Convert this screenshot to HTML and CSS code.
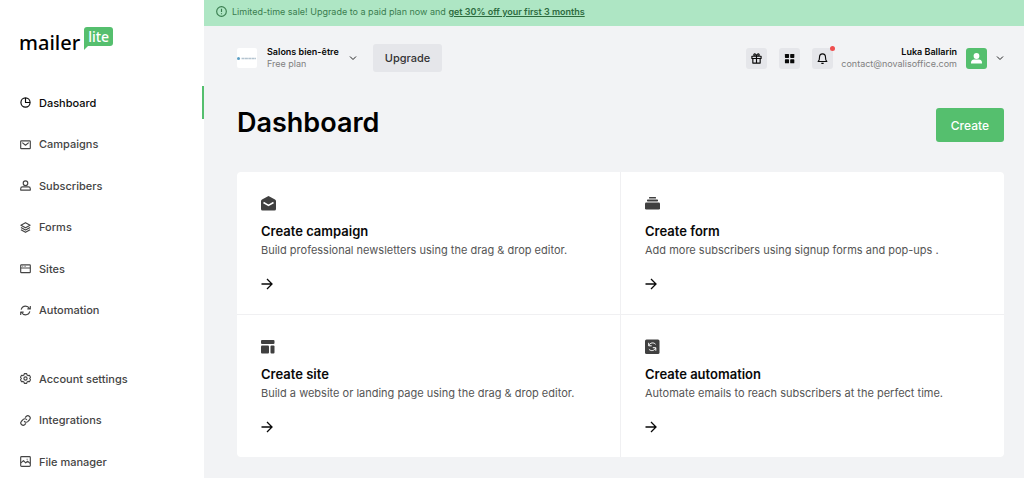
FILE: index.html
```html
<!DOCTYPE html>
<html lang="en">
<head>
<meta charset="utf-8">
<meta name="viewport" content="width=device-width, initial-scale=1">
<title>Dashboard</title>
<link rel="stylesheet" href="styles.css">
</head>
<body>
<div class="app">
  <aside class="sidebar">
    <a class="logo" href="#">
      <span class="logo-word">mailer</span>
      <span class="logo-badge">lite</span>
    </a>
    <nav class="nav nav-primary">
      <a class="nav-item active" href="#"><svg class="icon" viewBox="0 0 24 24"><circle cx="12" cy="12" r="10"/><path d="M12 2v10h10"/></svg>Dashboard</a>
      <a class="nav-item" href="#"><svg class="icon" viewBox="0 0 24 24"><rect x="1.500" y="4" width="21" height="17" rx="1.500"/><path d="M5 8l7 5.500L19 8"/></svg>Campaigns</a>
      <a class="nav-item" href="#"><svg class="icon" viewBox="0 0 24 24"><circle cx="12" cy="7" r="5"/><path d="M1.500 22v-3c0-2.500 2-4 4-4h13c2 0 4 1.500 4 4v3z"/></svg>Subscribers</a>
      <a class="nav-item" href="#"><svg class="icon" viewBox="0 0 24 24"><path d="M12 1.500L22 7l-10 5.500L2 7z"/><path d="M2 12l10 5.500L22 12M2 17l10 5.500L22 17"/></svg>Forms</a>
      <a class="nav-item" href="#"><svg class="icon" viewBox="0 0 24 24"><rect x="1.500" y="4" width="21" height="17" rx="1.500"/><path d="M1.500 11h21M5 7.500h1M8.500 7.500h1M12 7.500h1"/></svg>Sites</a>
      <a class="nav-item" href="#"><svg class="icon" viewBox="0 0 24 24"><path d="M2.500 10C4 5 8 2.500 12 2.500c4 0 7 2 9 5.500M22.500 2v6.500H16M21.500 14c-1.500 5-5.500 7.500-9.500 7.500-4 0-7-2-9-5.500M1.500 22v-6.500H8"/></svg>Automation</a>
    </nav>
    <nav class="nav nav-secondary">
      <a class="nav-item" href="#"><svg class="icon" viewBox="0 0 24 24"><path d="M9.500 1.500h5l1 3 2 1.200 3.100-.7 2.400 4.300L21 12l2 2.700-2.400 4.300-3.100-.7-2 1.200-1 3h-5l-1-3-2-1.200-3.100.7L1 14.700 3 12 1 9.300 3.400 5l3.100.7 2-1.200z"/><circle cx="12" cy="12" r="3.500"/></svg>Account settings</a>
      <a class="nav-item" href="#"><svg class="icon" viewBox="0 0 24 24"><path d="M9 13.500c2 2.700 5.500 3 7.800.8l4-4c4.600-5-2.500-11.500-7.300-7.100L11 5.600"/><path d="M15 10.500c-2-2.700-5.500-3-7.800-.8l-4 4c-4.600 5 2.500 11.500 7.300 7.100l2.500-2.400"/></svg>Integrations</a>
      <a class="nav-item" href="#"><svg class="icon" viewBox="0 0 24 24"><rect x="1.500" y="1.500" width="21" height="21" rx="2"/><path d="M2 15l5.500-5 5 5 4-3.500L22 16M14.500 7h2"/></svg>File manager</a>
    </nav>
  </aside>

  <div class="content">
    <div class="banner">
      <svg class="icon" viewBox="0 0 24 24"><circle cx="12" cy="12" r="10.500"/><path d="M12 6v7M12 16v2"/></svg>
      <p>Limited-time sale! Upgrade to a paid plan now and <a href="#">get 30% off your first 3 months</a></p>
    </div>

    <header class="topbar">
      <button class="account" type="button">
        <svg class="account-logo" viewBox="0 0 20 20"><circle cx="1.500" cy="10.500" r="1.500" fill="#5b9fc4"/><path d="M4.500 10.500H19" stroke="#b4c4d0" stroke-width="1.500" stroke-dasharray="3 .4"/></svg>
        <span class="label"><strong>Salons bien-être</strong><span>Free plan</span></span>
        <svg class="chevron" viewBox="0 0 8 8"><path d="M1 2.500l3 3 3-3"/></svg>
      </button>
      <button class="upgrade" type="button">Upgrade</button>
      <div class="tools">
        <button class="tool" type="button" aria-label="Gifts"><svg class="icon" viewBox="0 0 24 24"><path d="M2 7h20v5H2zM4 12v10h16V12M12 7v15M12 7C7 7 5.500 5 6.500 3S11 1.500 12 7c1-5.500 4.500-6 5.500-4S17 7 12 7"/></svg></button>
        <button class="tool" type="button" aria-label="Apps"><svg class="icon solid" viewBox="0 0 24 24"><rect x="2" y="2" width="9" height="9" rx="1.500"/><rect x="13.500" y="2" width="9" height="9" rx="1.500"/><rect x="2" y="13.500" width="9" height="9" rx="1.500"/><rect x="13.500" y="13.500" width="9" height="9" rx="1.500"/></svg></button>
        <button class="tool notify" type="button" aria-label="Notifications"><svg class="icon" viewBox="0 0 24 24"><path d="M2.500 18.500c2.500-2 3-4 3-9.500 0-4 3-7 6.500-7s6.500 3 6.500 7c0 5.500.5 7.500 3 9.500zM9.500 22.500h5"/></svg></button>
      </div>
      <button class="user" type="button">
        <span class="label"><strong>Luka Ballarin</strong><span>contact@novalisoffice.com</span></span>
        <svg class="avatar" viewBox="0 0 21 21"><circle cx="10.500" cy="8" r="2.900"/><path d="M5 15.500v-1c0-2 1.500-3 3-3h5c1.500 0 3 1 3 3v1z"/></svg>
        <svg class="chevron" viewBox="0 0 8 8"><path d="M1 2.500l3 3 3-3"/></svg>
      </button>
    </header>

    <main class="page">
      <div class="page-head">
        <h1>Dashboard</h1>
        <button class="create" type="button">Create</button>
      </div>
      <div class="cards">
        <a class="card" href="#">
          <svg class="card-icon" viewBox="0 0 15 15"><path d="M7.500 0L14 3.500q1 .5 1 1.500v8q0 1.500-1.500 1.500h-12Q0 14.500 0 13V5q0-1 1-1.500z"/><path class="cut" d="M2.500 6.500l5 3 5-3"/></svg>
          <h2>Create campaign</h2>
          <p>Build professional newsletters using the drag &amp; drop editor.</p>
          <svg class="arrow" viewBox="0 0 12 12"><path d="M.5 6h10.500M6 1l5 5-5 5"/></svg>
        </a>
        <a class="card" href="#">
          <svg class="card-icon" viewBox="0 0 15 15"><rect x="4" y="1" width="7" height="1.500" rx=".5"/><rect x="2" y="3.500" width="11" height="2" rx=".7"/><rect x="0" y="6.500" width="15" height="7" rx="1.300"/></svg>
          <h2>Create form</h2>
          <p>Add more subscribers using signup forms and pop-ups .</p>
          <svg class="arrow" viewBox="0 0 12 12"><path d="M.5 6h10.500M6 1l5 5-5 5"/></svg>
        </a>
        <a class="card" href="#">
          <svg class="card-icon" viewBox="0 0 15 15"><rect x="0" y="1" width="13.500" height="4" rx="1"/><rect x="0" y="6.500" width="8" height="8" rx="1"/><rect x="9.500" y="6.500" width="4" height="8" rx="1"/></svg>
          <h2>Create site</h2>
          <p>Build a website or landing page using the drag &amp; drop editor.</p>
          <svg class="arrow" viewBox="0 0 12 12"><path d="M.5 6h10.500M6 1l5 5-5 5"/></svg>
        </a>
        <a class="card" href="#">
          <svg class="card-icon" viewBox="0 0 15 15"><rect x="0" y=".5" width="14.500" height="14.500" rx="1.500"/><path class="cut thin" d="M3.700 3.800v3h3M3.900 6.500C4.800 3.800 8.500 2.900 10.600 5.300M10.800 11.700v-3h-3M10.600 9c-.9 2.700-4.600 3.600-6.700 1.200"/></svg>
          <h2>Create automation</h2>
          <p>Automate emails to reach subscribers at the perfect time.</p>
          <svg class="arrow" viewBox="0 0 12 12"><path d="M.5 6h10.500M6 1l5 5-5 5"/></svg>
        </a>
      </div>
    </main>
  </div>
</div>
</body>
</html>
```
FILE: styles.css
```css
* { box-sizing: border-box; }
body {
  margin: 0;
  background: #f2f3f5;
  color: #090909;
  font-family: Inter, "Liberation Sans", sans-serif;
  font-size: 11px;
}
h1, h2, p { margin: 0; }
a { color: inherit; text-decoration: none; }
button { border: 0; padding: 0; background: none; color: inherit; font: inherit; cursor: pointer; }
svg { display: block; flex: none; fill: none; stroke: currentColor; }

.app { display: grid; grid-template-columns: 204px 1fr; min-height: 100vh; }

.sidebar { display: flex; flex-direction: column; background: #fff; }
.logo { display: flex; align-items: flex-start; gap: 4px; padding: 27px 0 0 19px; height: 86px; font-family: "Noto Sans", sans-serif; }
.logo-word { padding-top: 2px; font-size: 20px; line-height: 28px; font-weight: 500; color: #000; }
.logo-badge { position: relative; padding: 0 4px; border-radius: 3px; background: #55bf6e; color: #fff; font-size: 14px; line-height: 19px; font-weight: 500; }
.logo-badge::after { content: ""; position: absolute; left: 0; top: 16px; border-top: 7px solid #55bf6e; border-right: 7px solid transparent; }

.nav { display: flex; flex-direction: column; justify-content: space-between; }
.nav-primary { min-height: 241px; }
.nav-secondary { min-height: 116px; margin-top: 35px; }
.nav-item { display: flex; align-items: center; gap: 8px; height: 33px; padding-left: 20px; border-right: 2px solid transparent; color: #444; font-weight: 500; }
.nav-item.active { border-color: #55bf6e; color: #090909; }
.icon { width: 11px; height: 11px; stroke-width: 2.500; stroke-linejoin: round; }
.icon.solid { fill: #090909; stroke: none; }

.content { min-width: 0; }
.banner { display: flex; align-items: center; gap: 5px; height: 26px; padding: 0 12px 4px; background: #aee6c4; color: #3a7d4f; font-size: 9px; }
.banner a { color: #2d6b3f; font-weight: 600; text-decoration: underline; }

.topbar { display: flex; align-items: center; padding: 18px 20px 0 33px; }
.label { display: grid; font-size: 9px; line-height: 12px; text-align: left; color: #808080; }
.label strong { color: #090909; font-weight: 600; }
.account, .user { display: flex; align-items: center; gap: 9px; }
.account { gap: 10px; }
.account-logo { width: 20px; height: 20px; border-radius: 2px; background: #fff; stroke: none; }
.chevron { width: 8px; height: 8px; color: #222; }
.upgrade { height: 28px; margin-left: 16px; padding: 0 12px; border-radius: 3px; background: #e5e6ea; color: #333; font-weight: 500; }
.tools { display: flex; gap: 12px; margin-left: auto; }
.tool { display: grid; place-items: center; width: 21px; height: 21px; border-radius: 3px; background: #e5e6ea; }
.notify { position: relative; }
.notify::after { content: ""; position: absolute; top: -2px; right: -2px; width: 5px; height: 5px; border-radius: 50%; background: #ef4f4f; }
.user { margin-left: 8px; }
.user .label { text-align: right; }
.avatar { width: 21px; height: 21px; border-radius: 3px; background: #55bf6e; fill: #fff; stroke: none; }

.page { padding: 36px 20px 20px 33px; }
.page-head { display: flex; justify-content: space-between; align-items: flex-start; }
h1 { font-size: 27px; line-height: 30px; font-weight: 600; color: #000; }
.create { height: 34px; padding: 0 15px; border-radius: 3px; background: #55bf6e; color: #fff; font-size: 12px; font-weight: 500; }
.cards { display: grid; grid-template-columns: 1fr 1fr; gap: 1px; margin-top: 30px; border-radius: 4px; overflow: hidden; background: #f0f0f2; }
.card { display: flex; flex-direction: column; align-items: flex-start; padding: 24px; background: #fff; }
.card-icon { width: 15px; height: 15px; fill: #404040; stroke: none; }
.card-icon .cut { fill: none; stroke: #fff; stroke-width: 1.500; }
.card-icon .thin { stroke-width: 1; }
h2 { margin-top: 10px; font-size: 13px; line-height: 20px; font-weight: 600; }
.card p { line-height: 18px; color: #555; }
.arrow { width: 12px; height: 12px; margin-top: 19px; stroke-width: 1.300; }
```
